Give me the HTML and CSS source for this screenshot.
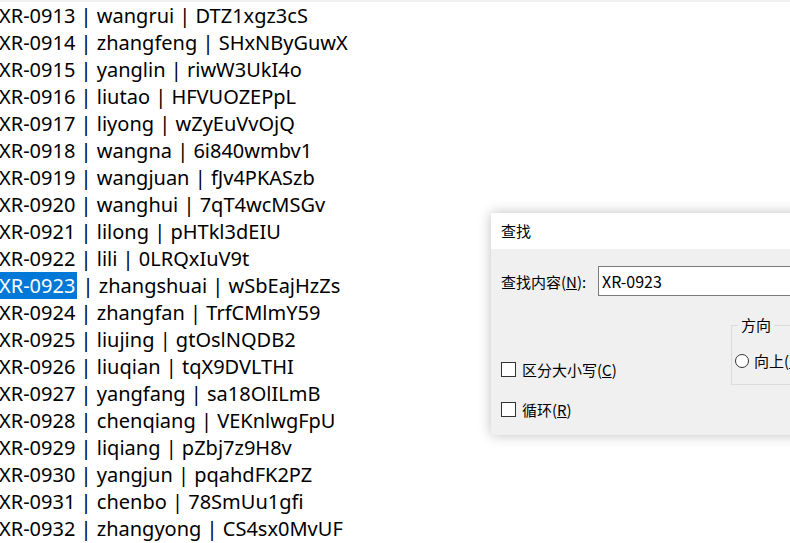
FILE: index.html
```html
<!DOCTYPE html>
<html>
<head>
<meta charset="utf-8">
<link rel="stylesheet" href="styles.css">
</head>
<body>
<div class="screen">
  <div class="topstrip"></div>
  <div class="editor">
    <div class="line">XR-0913 | wangrui | DTZ1xgz3cS</div>
    <div class="line">XR-0914 | zhangfeng | SHxNByGuwX</div>
    <div class="line">XR-0915 | yanglin | riwW3UkI4o</div>
    <div class="line">XR-0916 | liutao | HFVUOZEPpL</div>
    <div class="line">XR-0917 | liyong | wZyEuVvOjQ</div>
    <div class="line">XR-0918 | wangna | 6i840wmbv1</div>
    <div class="line">XR-0919 | wangjuan | fJv4PKASzb</div>
    <div class="line">XR-0920 | wanghui | 7qT4wcMSGv</div>
    <div class="line">XR-0921 | lilong | pHTkl3dEIU</div>
    <div class="line">XR-0922 | lili | 0LRQxIuV9t</div>
    <div class="line"><span class="sel">XR-0923</span> | zhangshuai | wSbEajHzZs</div>
    <div class="line">XR-0924 | zhangfan | TrfCMlmY59</div>
    <div class="line">XR-0925 | liujing | gtOslNQDB2</div>
    <div class="line">XR-0926 | liuqian | tqX9DVLTHI</div>
    <div class="line">XR-0927 | yangfang | sa18OlILmB</div>
    <div class="line">XR-0928 | chenqiang | VEKnlwgFpU</div>
    <div class="line">XR-0929 | liqiang | pZbj7z9H8v</div>
    <div class="line">XR-0930 | yangjun | pqahdFK2PZ</div>
    <div class="line">XR-0931 | chenbo | 78SmUu1gfi</div>
    <div class="line">XR-0932 | zhangyong | CS4sx0MvUF</div>
  </div>

  <div class="dialog">
    <div class="titlebar">查找</div>
    <div class="dbody">
      <div class="findrow">
        <span class="label">查找内容(<u>N</u>):</span>
        <div class="input">XR-0923</div>
      </div>
      <div class="optrow">
        <div class="checks">
          <div class="check"><span class="box"></span><span>区分大小写(<u>C</u>)</span></div>
          <div class="check"><span class="box"></span><span>循环(<u>R</u>)</span></div>
        </div>
        <div class="group">
          <span class="legend">方向</span>
          <div class="radio"><span class="circle"></span><span>向上(<u>U</u>)</span></div>
        </div>
      </div>
    </div>
  </div>
</div>
</body>
</html>
```

FILE: styles.css
```css
html, body {
  margin: 0;
  padding: 0;
  background: #ffffff;
}
.screen {
  position: relative;
  width: 790px;
  height: 543px;
  overflow: hidden;
  font-family: "Noto Sans", "Noto Sans CJK SC", sans-serif;
}
.topstrip {
  height: 2px;
  background: #f0f0f0;
}
.editor {
  margin-left: -1px;
  font-size: 20px;
  line-height: 27px;
  color: #000;
}
.line {
  height: 27px;
  white-space: pre;
}
.sel {
  background: #0078d7;
  color: #fff;
  padding-right: 2px;
}
.dialog {
  position: absolute;
  left: 491px;
  top: 213px;
  width: 340px;
  height: 222px;
  background: #f0f0f0;
  box-shadow: 0 0 12px rgba(0,0,0,0.25);
  font-family: "Noto Sans CJK SC", sans-serif;
  font-size: 15px;
  color: #000;
}
.titlebar {
  height: 36px;
  background: #fff;
  line-height: 36px;
  padding-left: 10px;
}
.dbody {
  padding: 17px 0 0 10px;
}
.findrow {
  display: flex;
  align-items: center;
  gap: 10px;
}
.label {
  width: 87px;
  flex-shrink: 0;
}
.input {
  flex-shrink: 0;
  width: 220px;
  height: 28px;
  border: 1px solid #7a7a7a;
  background: #fff;
  line-height: 28px;
  padding-left: 3px;
  font-size: 16px;
}
.optrow {
  display: flex;
  margin-top: 29px;
}
.checks {
  flex-shrink: 0;
  width: 230px;
  padding-top: 34px;
  display: flex;
  flex-direction: column;
  gap: 19px;
}
.check {
  display: flex;
  align-items: center;
  gap: 6px;
  height: 21px;
}
.box {
  width: 13px;
  height: 13px;
  border: 1px solid #333;
  background: #fff;
}
.group {
  flex-shrink: 0;
  position: relative;
  width: 120px;
  height: 58px;
  border: 1px solid #dcdcdc;
}
.legend {
  position: absolute;
  left: 6px;
  top: -11px;
  background: #f0f0f0;
  padding: 0 3px;
  line-height: 20px;
}
.radio {
  display: flex;
  align-items: center;
  gap: 5px;
  margin: 24px 0 0 3px;
}
.circle {
  width: 12px;
  height: 12px;
  border: 1px solid #333;
  border-radius: 50%;
  background: #fff;
}
```
